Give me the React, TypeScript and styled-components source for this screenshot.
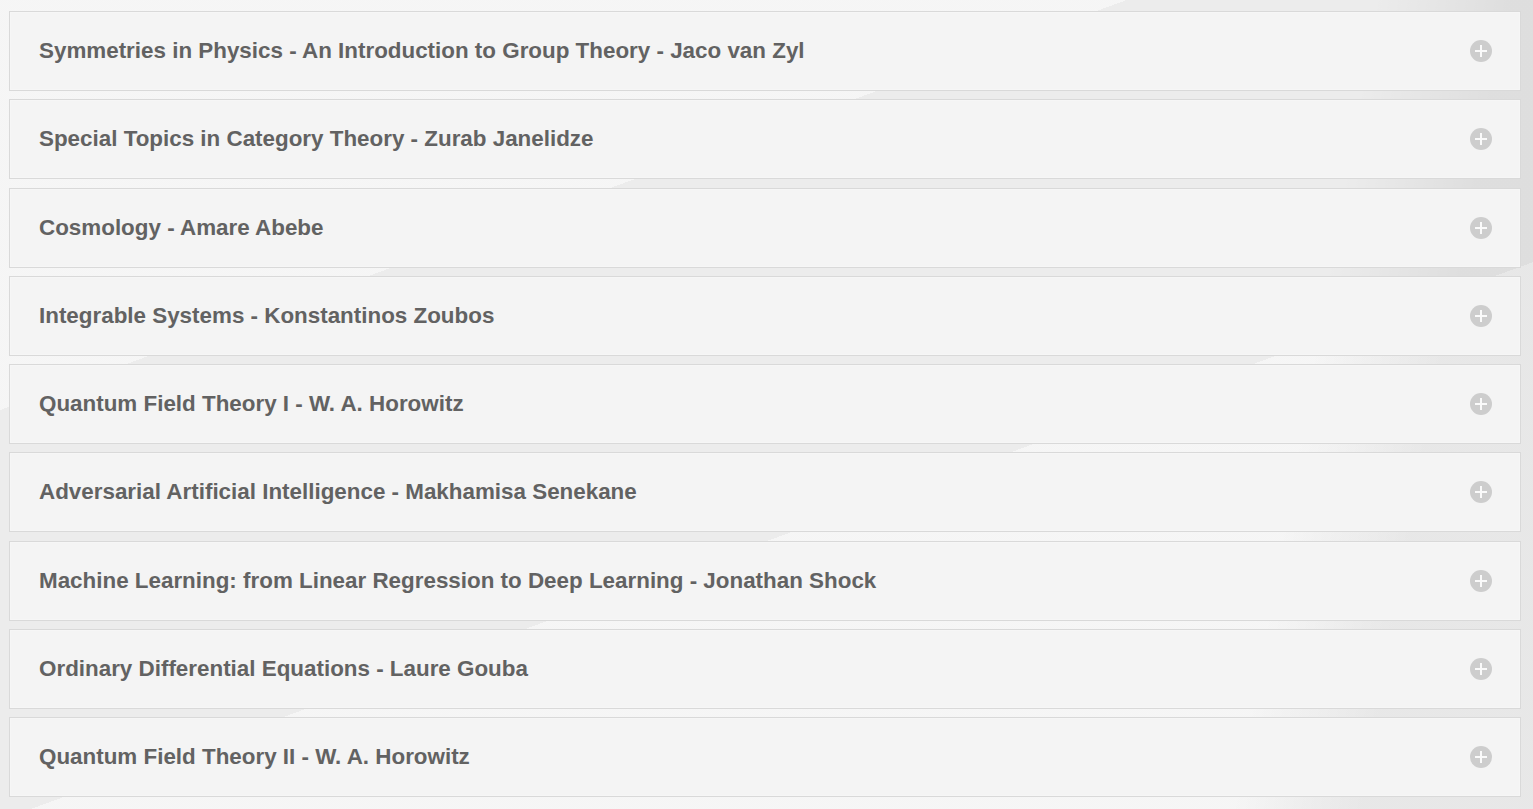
import React from "react";
import styled, { createGlobalStyle } from "styled-components";

const Global = createGlobalStyle`
  html, body { margin: 0; padding: 0; }
  body {
    width: 1533px;
    height: 809px;
    overflow: hidden;
    background:
      linear-gradient(100deg, transparent 0 82%, rgba(0,0,0,0.06) 90% 100%),
      linear-gradient(160deg, rgba(255,255,255,0.5) 0 30%, transparent 30% 60%, rgba(255,255,255,0.5) 60% 100%),
      #ececec;
    font-family: "Liberation Sans", Arial, sans-serif;
  }
`;

const List = styled.div`
  display: flex;
  flex-direction: column;
  gap: 8.25px;
  padding: 11px 12px 0 9px;
`;

const Panel = styled.div`
  box-sizing: border-box;
  height: 80px;
  background: #f4f4f4;
  border: 1px solid #d9d9d9;
  box-shadow: inset 0 0 0 1px #f6f6f6;
  display: flex;
  align-items: center;
  justify-content: space-between;
  padding: 0 28px 0 29px;
`;

const Title = styled.h3`
  margin: 0;
  font-family: "Liberation Sans", Arial, sans-serif;
  font-weight: 700;
  font-size: 22.4px;
  color: #626262;
  letter-spacing: 0;
`;

const PlusIcon = styled.span`
  width: 22px;
  height: 22px;
  border-radius: 50%;
  background: #cdcdcd;
  position: relative;
  flex: none;
  &::before, &::after {
    content: "";
    position: absolute;
    background: #fafafa;
    left: 50%;
    top: 50%;
    transform: translate(-50%, -50%);
  }
  &::before { width: 12px; height: 2px; }
  &::after { width: 2px; height: 12px; }
`;

const courses = [
  "Symmetries in Physics - An Introduction to Group Theory - Jaco van Zyl",
  "Special Topics in Category Theory - Zurab Janelidze",
  "Cosmology - Amare Abebe",
  "Integrable Systems - Konstantinos Zoubos",
  "Quantum Field Theory I - W. A. Horowitz",
  "Adversarial Artificial Intelligence - Makhamisa Senekane",
  "Machine Learning: from Linear Regression to Deep Learning - Jonathan Shock",
  "Ordinary Differential Equations - Laure Gouba",
  "Quantum Field Theory II - W. A. Horowitz",
];

export default function App() {
  return (
    <>
      <Global />
      <List>
        {courses.map((c) => (
          <Panel key={c}>
            <Title>{c}</Title>
            <PlusIcon />
          </Panel>
        ))}
      </List>
    </>
  );
}
